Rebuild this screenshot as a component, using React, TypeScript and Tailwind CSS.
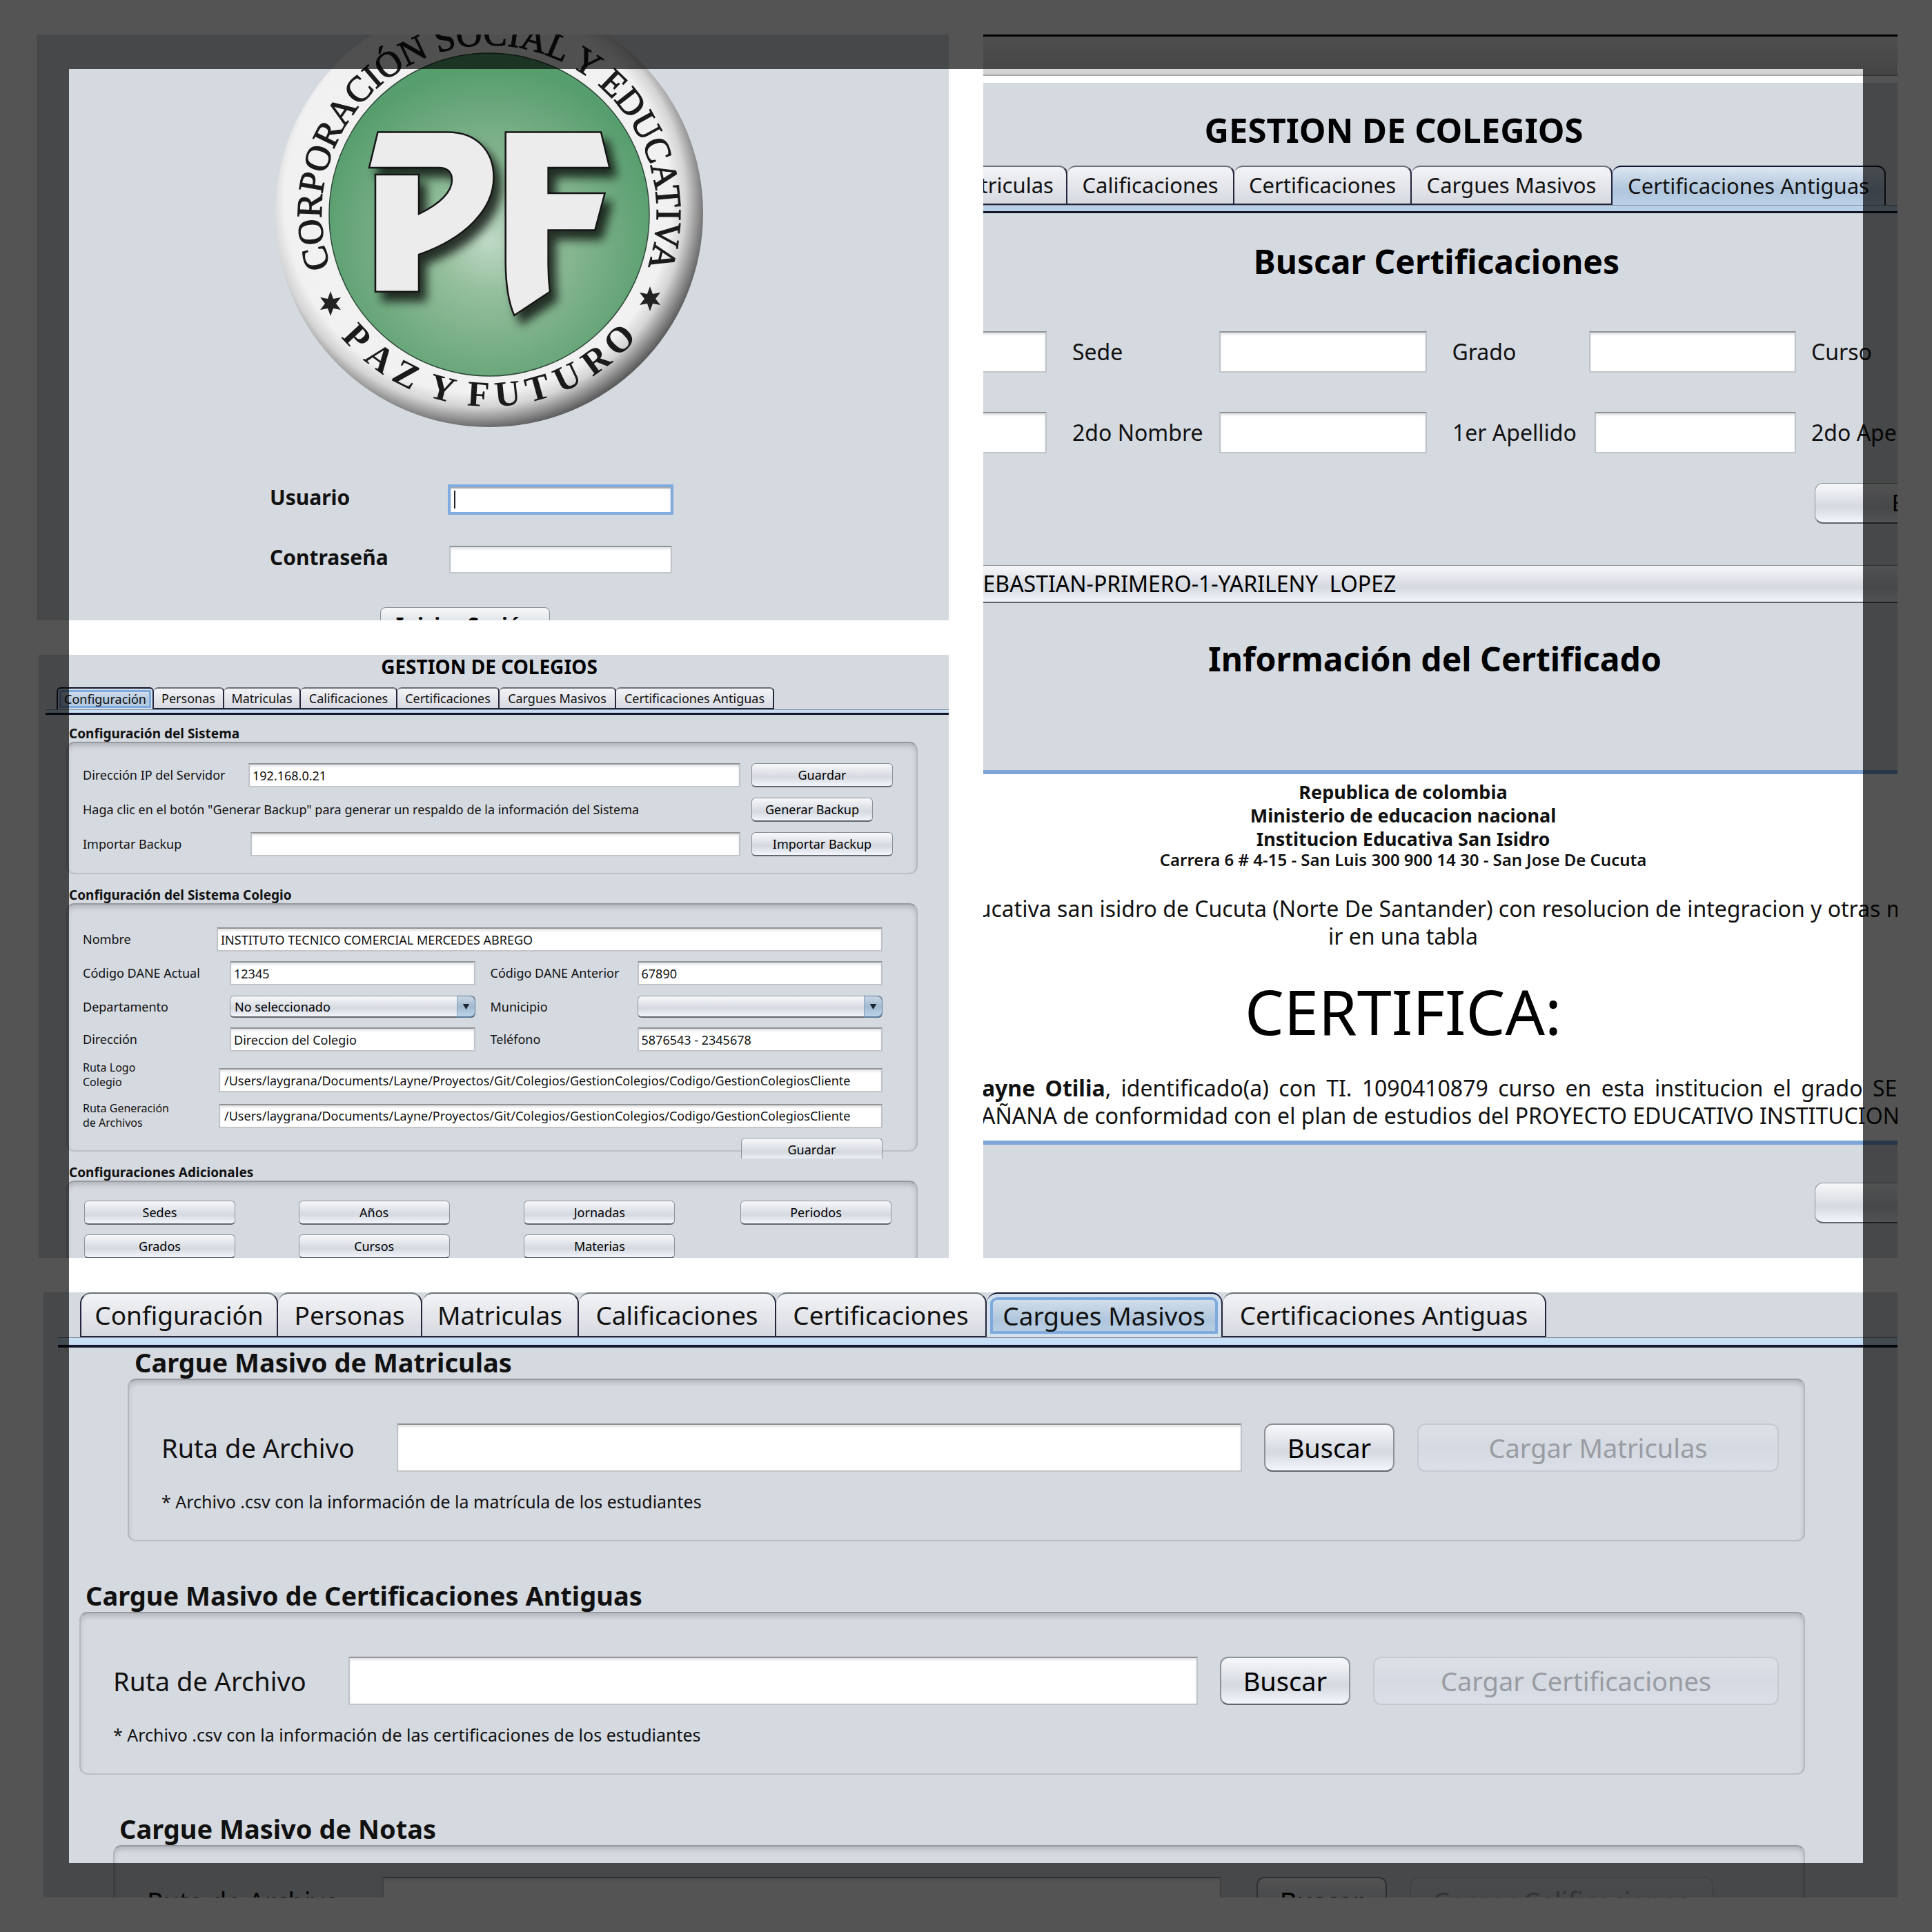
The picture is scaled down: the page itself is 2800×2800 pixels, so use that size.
import React from "react";
import clsx from "clsx";

const raised =
  "border border-[#8d9299] border-b-2 border-b-[#61666c] bg-gradient-to-b from-[#f7f8fa] via-[#d5d9e0] via-60% to-[#f3f6fc] text-black whitespace-nowrap";

function Btn({ children, className, label }: { children?: React.ReactNode; className?: string; label?: string }) {
  return (
    <button type="button" aria-label={label} className={clsx("shrink-0 leading-none text-center", raised, className)}>
      {children}
    </button>
  );
}

function DisabledBtn({ children, className }: { children: React.ReactNode; className?: string }) {
  return (
    <button
      type="button"
      disabled
      className={clsx(
        "shrink-0 rounded-xl border-2 border-[#c5c9d0] bg-gradient-to-b from-[#dde1e7] via-[#d5d9e1] to-[#dbdfe7] leading-none text-[#999ca2] whitespace-nowrap",
        className,
      )}
    >
      {children}
    </button>
  );
}

function Field({ id, value, className, label, type = "text" }: { id?: string; value?: string; className?: string; label?: string; type?: string }) {
  return (
    <input
      id={id}
      type={type}
      aria-label={label}
      defaultValue={value}
      className={clsx(
        "min-w-0 border-2 border-t-[#909296] border-x-[#c0c3c9] border-b-[#c4c5c8] bg-white text-[#111] shadow-[inset_0_3px_3px_rgba(0,0,0,0.10)] outline-none",
        className,
      )}
    />
  );
}

type TabItem = { label: string; width: string };

function Tabs({
  items,
  active,
  focusClass,
  rowClass,
  tabClass,
  bandClass,
}: {
  items: TabItem[];
  active: string;
  focusClass?: string;
  rowClass: string;
  tabClass: string;
  bandClass: string;
}) {
  return (
    <div>
      <div role="tablist" className={clsx("flex", rowClass)}>
        {items.map((t) => {
          const on = t.label === active;
          return (
            <button
              key={t.label}
              type="button"
              role="tab"
              aria-selected={on}
              className={clsx(
                "shrink-0 border-r-2 border-[#23263c] text-center leading-none whitespace-nowrap text-[#111] first:border-l-2",
                tabClass,
                t.width,
                on
                  ? "border-t-[#12162c] bg-gradient-to-b from-[#dce6f1] via-[#b0c6dc] via-60% to-[#bad1e8]"
                  : "border-b-2 border-t-[#6b6f78] bg-gradient-to-b from-[#f3f4f7] to-[#d6d9e0]",
                on && focusClass,
              )}
            >
              {t.label}
            </button>
          );
        })}
      </div>
      <div className={clsx("border-t border-t-[#8a909b] border-b-[#14182b]", bandClass)} />
    </div>
  );
}

const group =
  "rounded-xl border-2 border-t-[#96999e] border-x-[#b3b7bd] border-b-[#bcc0c6] shadow-[inset_0_5px_8px_-2px_rgba(0,0,0,0.20)]";

const motto = [
  { ch: "P", a: 46.9 },
  { ch: "A", a: 37 },
  { ch: "Z", a: 27.2 },
  { ch: "Y", a: 15 },
  { ch: "F", a: 3.4 },
  { ch: "U", a: -5.8 },
  { ch: "T", a: -15.5 },
  { ch: "U", a: -25.4 },
  { ch: "R", a: -36 },
  { ch: "O", a: -45.8 },
];

const star = "M0,-18 L4,-7 L15,-9 L8,0 L15,9 L4,7 L0,18 L-4,7 L-15,9 L-8,0 L-15,-9 L-4,-7 Z";

function Logo() {
  return (
    <svg viewBox="0 0 620 620" role="img" aria-label="Corporación Social y Educativa Paz y Futuro" className="size-[620px] shrink-0">
      <defs>
        <radialGradient id="rim" gradientUnits="userSpaceOnUse" cx="294" cy="290" r="334">
          <stop offset="0" stopColor="#f2f2f2" />
          <stop offset="0.84" stopColor="#f1f1f1" />
          <stop offset="0.9" stopColor="#d4d4d4" />
          <stop offset="0.96" stopColor="#8c8c8c" />
          <stop offset="1" stopColor="#5c5c5c" />
        </radialGradient>
        <radialGradient id="field" gradientUnits="userSpaceOnUse" cx="310" cy="350" r="250">
          <stop offset="0" stopColor="#bfd9c6" />
          <stop offset="0.3" stopColor="#95bf9d" />
          <stop offset="0.7" stopColor="#72ab81" />
          <stop offset="1" stopColor="#579e6e" />
        </radialGradient>
        <filter id="drop" x="-20%" y="-20%" width="150%" height="150%">
          <feDropShadow dx="10" dy="13" stdDeviation="7" floodColor="#000" floodOpacity="0.75" />
        </filter>
        <path id="arc" d="M80.4,389 A243,243 0 1 1 539.6,389" />
      </defs>
      <circle cx="310" cy="310" r="310" fill="url(#rim)" />
      <ellipse cx="310" cy="312" rx="232" ry="234" fill="url(#field)" stroke="#2f4a38" strokeWidth="1.5" />
      <text fontFamily='"Liberation Serif", serif' fontSize="52" fill="#1a1a1a" stroke="#1a1a1a" strokeWidth="1.2" textAnchor="middle">
        <textPath href="#arc" startOffset="50%">
          CORPORACIÓN SOCIAL Y EDUCATIVA
        </textPath>
      </text>
      <g fontFamily='"Liberation Serif", serif' fontSize="52" fontWeight="700" fill="#1a1a1a" textAnchor="middle">
        {motto.map((m, i) => (
          <text key={i} x="310" y="590" transform={`rotate(${m.a} 310 310)`}>
            {m.ch}
          </text>
        ))}
      </g>
      <path d={star} transform="translate(80 441)" fill="#222" />
      <path d={star} transform="translate(543 434)" fill="#222" />
      <g filter="url(#drop)" fill="#ececec" stroke="#161616" strokeWidth="2.5">
        <path d="M148.5,192.5 H250 C292,192.5 316.5,220 316.5,258 C316.5,304 276,346 208,370 V423.7 H145 V254 H208 V311 C240,296 256,278 256,262 C256,250 249,244 237,244 H136 Z" />
        <path d="M333.7,192.5 H472 L484.4,244 H395.6 V281 H477.6 L463.3,334.5 H395.6 V385 Q395.6,405 398,423.7 L346.3,458 Q333.7,430 333.7,378 Z" />
      </g>
    </svg>
  );
}

function LoginPanel() {
  return (
    <section className="ml-[3px] overflow-hidden bg-[#d5d9e0]">
      <div className="-mt-[51px] flex justify-center pr-[10px]">
        <Logo />
      </div>
      <form className="mx-auto flex w-[646px] flex-col text-[30px] text-[#111]">
        <div className="mt-[83px] flex h-11">
          <label htmlFor="usuario" className="w-[258px] leading-[38px] font-bold">
            Usuario
          </label>
          <div className="relative">
            <Field id="usuario" className="block h-11 w-[327px] !border-4 !border-[#7fabdf] !shadow-[inset_0_2px_2px_rgba(0,0,0,0.35)]" />
            <span className="absolute top-[9px] left-[9px] h-[26px] w-[2px] bg-[#222]" />
          </div>
        </div>
        <div className="mt-[45px] flex h-10">
          <label htmlFor="clave" className="w-[260px] leading-[34px] font-bold">
            Contraseña
          </label>
          <Field id="clave" type="password" className="h-10 w-[323px]" />
        </div>
        <Btn className="mt-[49px] ml-[160px] h-[52px] w-[246px] rounded-lg font-bold">Iniciar Sesión</Btn>
      </form>
    </section>
  );
}

const searchTabs: TabItem[] = [
  { label: "Matriculas", width: "w-[192px]" },
  { label: "Calificaciones", width: "w-[242px]" },
  { label: "Certificaciones", width: "w-[257px]" },
  { label: "Cargues Masivos", width: "w-[291px]" },
  { label: "Certificaciones Antiguas", width: "w-[396px]" },
];

function SearchPanel() {
  return (
    <section className="row-span-2 overflow-hidden bg-[#d5d9e0] text-[32px] text-[#111]">
      <div className="h-[60px] border-t-[3px] border-b-2 border-t-black border-b-[#a9a9a9] bg-gradient-to-b from-[#ececec] to-[#d2d2d2]" />
      <div className="h-[10px] bg-white" />
      <h1 className="mt-10 pr-[135px] text-center text-[49px] leading-[56px] font-bold text-black">GESTION DE COLEGIOS</h1>
      <div className="mt-[24px]">
        <Tabs
          items={searchTabs}
          active="Certificaciones Antiguas"
          rowClass="-ml-[70px] h-[57px] text-[31px]"
          tabClass="rounded-t-xl border-t-2"
          bandClass="h-[12px] border-b-[3px] bg-[#b9d0e8]"
        />
      </div>
      <h2 className="mt-[42px] pr-[11px] text-center text-[48px] leading-[56px] font-bold text-black">Buscar Certificaciones</h2>
      <div className="mt-[73px] flex h-[60px] items-center whitespace-nowrap">
        <Field label="Año" className="-ml-[10px] h-[60px] w-[102px]" />
        <label htmlFor="sede" className="ml-[37px] w-[213px] shrink-0">
          Sede
        </label>
        <Field id="sede" className="h-[60px] flex-1" />
        <label htmlFor="grado" className="ml-[37px] w-[198px] shrink-0">
          Grado
        </label>
        <Field id="grado" className="h-[60px] flex-1" />
        <span className="ml-[22px] w-[125px] shrink-0">Curso</span>
      </div>
      <div className="mt-[57px] flex h-[60px] items-center whitespace-nowrap">
        <Field label="1er Nombre" className="-ml-[10px] h-[60px] w-[102px]" />
        <label htmlFor="nombre2" className="ml-[37px] w-[213px] shrink-0">
          2do Nombre
        </label>
        <Field id="nombre2" className="h-[60px] flex-[301]" />
        <label htmlFor="apellido1" className="ml-[37px] w-[206px] shrink-0">
          1er Apellido
        </label>
        <Field id="apellido1" className="h-[60px] flex-[292]" />
        <span className="ml-[22px] w-[125px] shrink-0">2do Apellido</span>
      </div>
      <div className="mt-[43px] flex justify-end">
        <Btn className="-mr-[206px] h-[59px] w-[326px] rounded-xl">Buscar</Btn>
      </div>
      <button
        type="button"
        aria-haspopup="listbox"
        className={clsx("mt-[60px] -ml-[19px] block h-[55px] w-[110%] text-left leading-none whitespace-pre", raised)}
      >
        {"SEBASTIAN-PRIMERO-1-YARILENY  LOPEZ"}
      </button>
      <h2 className="mt-[53px] pr-[16px] text-center text-[48px] leading-[56px] font-bold text-black">Información del Certificado</h2>
      <article className="mt-[133px] border-y-[6px] border-[#7da5d6] bg-white pt-[9px] pb-4 leading-10">
        <div className="pr-[108px] text-center text-[27px] leading-[34px] font-bold">
          <p>Republica de colombia</p>
          <p>Ministerio de educacion nacional</p>
          <p>Institucion Educativa San Isidro</p>
          <p className="text-[24px] leading-[26px] font-semibold">Carrera 6 # 4-15 - San Luis 300 900 14 30 - San Jose De Cucuta</p>
        </div>
        <p className="mt-[38px] -ml-[28px] whitespace-nowrap">
          ducativa san isidro de Cucuta (Norte De Santander) con resolucion de integracion y otras mas
        </p>
        <p className="pr-[108px] text-center">ir en una tabla</p>
        <p className="mt-[38px] pr-[108px] text-center text-[90px] leading-[100px] text-black">CERTIFICA:</p>
        <div className="mt-[42px] -mr-[18px] -ml-[20px]">
          <p className="whitespace-nowrap [text-align-last:justify]">
            <b>Layne Otilia</b>, identificado(a) con TI. 1090410879 curso en esta institucion el grado SEX
          </p>
          <p className="-ml-[12px] whitespace-nowrap">
            MAÑANA de conformidad con el plan de estudios del PROYECTO EDUCATIVO INSTITUCIONAL
          </p>
        </div>
      </article>
      <div className="mt-[55px] flex justify-end">
        <Btn label="Generar" className="-mr-[210px] h-[59px] w-[330px] rounded-xl" />
      </div>
    </section>
  );
}

const configTabs: TabItem[] = [
  { label: "Configuración", width: "w-[141px]" },
  { label: "Personas", width: "w-[102px]" },
  { label: "Matriculas", width: "w-[111px]" },
  { label: "Calificaciones", width: "w-[140px]" },
  { label: "Certificaciones", width: "w-[148px]" },
  { label: "Cargues Masivos", width: "w-[169px]" },
  { label: "Certificaciones Antiguas", width: "w-[229px]" },
];

const small = "rounded-md";

function Combo({ id, value, className }: { id: string; value: string; className?: string }) {
  return (
    <div className={clsx("relative min-w-0", className)}>
      <select id={id} defaultValue={value} className={clsx("block h-8 w-full appearance-none rounded-md pl-1.5 leading-none", raised)}>
        <option>{value}</option>
      </select>
      <span className="pointer-events-none absolute inset-y-0 right-0 flex w-[27px] items-center justify-center rounded-r-lg border border-b-2 border-[#5c7b99] border-l-[#8aa5bf] bg-gradient-to-b from-[#c9d7e5] via-[#a2bad1] to-[#bcd3ea]">
        <svg viewBox="0 0 12 10" className="h-[8px] w-[11px]">
          <path d="M0,0 H12 L6,10 Z" fill="#1c2430" />
        </svg>
      </span>
    </div>
  );
}

const legend = "ml-11 text-[19px] leading-6 font-bold text-[#111]";
const projectPath = "/Users/laygrana/Documents/Layne/Proyectos/Git/Colegios/GestionColegios/Codigo/GestionColegiosCliente";

function ConfigPanel() {
  return (
    <section className="ml-[6px] overflow-hidden bg-[#d5d9e0] text-[18px] text-[#111]">
      <h1 className="pr-[13px] text-center text-[28px] leading-[34px] font-bold text-black">GESTION DE COLEGIOS</h1>
      <div className="mt-[13px]">
        <Tabs
          items={configTabs}
          active="Configuración"
          focusClass="shadow-[inset_0_0_0_2px_#d3e1ef,inset_0_0_0_5px_#7faadc]"
          rowClass="ml-[26px] h-8"
          tabClass="rounded-t-md border-t-2"
          bandClass="ml-[10px] h-[8px] border-b-[3px] bg-[#c9dff5]"
        />
      </div>

      <h2 className={clsx("mt-[15px]", legend)}>Configuración del Sistema</h2>
      <div className={clsx("mr-[45px] ml-10 flex h-[192px] flex-col gap-[15px] pt-[29px] pr-[34px] pl-[22px]", group)}>
        <div className="flex h-[35px] items-center">
          <label htmlFor="ip" className="w-[240px]">
            Dirección IP del Servidor
          </label>
          <Field id="ip" value="192.168.0.21" className="h-[35px] flex-1 pl-1" />
          <Btn className={clsx("ml-4 h-[35px] w-[205px]", small)}>Guardar</Btn>
        </div>
        <div className="flex h-[35px] items-center">
          <p className="flex-1">Haga clic en el botón "Generar Backup" para generar un respaldo de la información del Sistema</p>
          <Btn className={clsx("mr-[29px] h-[35px] w-[176px]", small)}>Generar Backup</Btn>
        </div>
        <div className="flex h-[35px] items-center">
          <label htmlFor="backup" className="w-[243px]">
            Importar Backup
          </label>
          <Field id="backup" className="h-[35px] flex-1 pl-1" />
          <Btn className={clsx("ml-4 h-[35px] w-[205px]", small)}>Importar Backup</Btn>
        </div>
      </div>

      <h2 className={clsx("mt-[18px]", legend)}>Configuración del Sistema Colegio</h2>
      <div className={clsx("mr-[45px] ml-10 flex flex-col pt-[33px] pr-[49px] pl-[22px]", group)}>
        <div className="flex h-[35px] items-center">
          <label htmlFor="nombre" className="w-[194px]">
            Nombre
          </label>
          <Field id="nombre" value="INSTITUTO TECNICO COMERCIAL MERCEDES ABREGO" className="h-[35px] flex-1 pl-1" />
        </div>
        <div className="mt-[14px] flex h-[35px] items-center">
          <label htmlFor="dane" className="w-[213px]">
            Código DANE Actual
          </label>
          <Field id="dane" value="12345" className="h-[35px] flex-1 pl-1" />
          <label htmlFor="daneAnt" className="ml-[22px] w-[213px]">
            Código DANE Anterior
          </label>
          <Field id="daneAnt" value="67890" className="h-[35px] flex-1 pl-1" />
        </div>
        <div className="mt-[15px] flex h-8 items-center">
          <label htmlFor="depto" className="w-[213px]">
            Departamento
          </label>
          <Combo id="depto" value="No seleccionado" className="flex-1" />
          <label htmlFor="municipio" className="ml-[22px] w-[213px]">
            Municipio
          </label>
          <Combo id="municipio" value="" className="flex-1" />
        </div>
        <div className="mt-[14px] flex h-[35px] items-center">
          <label htmlFor="direccion" className="w-[213px]">
            Dirección
          </label>
          <Field id="direccion" value="Direccion del Colegio" className="h-[35px] flex-1 pl-1" />
          <label htmlFor="telefono" className="ml-[22px] w-[213px]">
            Teléfono
          </label>
          <Field id="telefono" value="5876543 - 2345678" className="h-[35px] flex-1 pl-1" />
        </div>
        <div className="mt-[13px] flex h-[46px] items-end">
          <label htmlFor="rutaLogo" className="w-[197px] self-start text-[16px] leading-[21px]">
            Ruta Logo
            <br />
            Colegio
          </label>
          <Field id="rutaLogo" value={projectPath} className="h-[35px] flex-1 pl-1.5" />
        </div>
        <div className="mt-[13px] flex h-[42px] items-center">
          <label htmlFor="rutaGen" className="w-[197px] text-[16px] leading-[21px]">
            Ruta Generación
            <br />
            de Archivos
          </label>
          <Field id="rutaGen" value={projectPath} className="h-[35px] flex-1 pl-1.5" />
        </div>
        <div className="mt-[11px] -mb-3 h-[30px] w-[205px] self-end overflow-hidden">
          <Btn className={clsx("h-[35px] w-full", small)}>Guardar</Btn>
        </div>
      </div>

      <h2 className={clsx("mt-[18px]", legend)}>Configuraciones Adicionales</h2>
      <div className={clsx("mr-[45px] ml-10 grid h-[200px] grid-cols-[311fr_327fr_314fr_219fr] content-start gap-y-[14px] pt-[27px] pr-9 pl-6", group)}>
        {["Sedes", "Años", "Jornadas", "Periodos", "Grados", "Cursos", "Materias"].map((n) => (
          <Btn key={n} className={clsx("h-[35px] w-[219px]", small)}>
            {n}
          </Btn>
        ))}
      </div>
    </section>
  );
}

const uploadTabs: TabItem[] = [
  { label: "Configuración", width: "w-[287px]" },
  { label: "Personas", width: "w-[209px]" },
  { label: "Matriculas", width: "w-[227px]" },
  { label: "Calificaciones", width: "w-[286px]" },
  { label: "Certificaciones", width: "w-[305px]" },
  { label: "Cargues Masivos", width: "w-[342px]" },
  { label: "Certificaciones Antiguas", width: "w-[469px]" },
];

function Upload({
  id,
  title,
  action,
  note,
  titleClass,
  boxClass,
  searchClass,
  actionClass,
}: {
  id: string;
  title: string;
  action: string;
  note?: string;
  titleClass: string;
  boxClass: string;
  searchClass: string;
  actionClass: string;
}) {
  return (
    <>
      <h2 className={clsx("text-[38px] leading-[42px] font-bold text-[#111]", titleClass)}>{title}</h2>
      <div className={clsx("mt-[3px] mr-[134px] pl-[47px]", group, boxClass)}>
        <div className="flex h-[70px] items-center">
          <label htmlFor={id} className="w-[341px] shrink-0">
            Ruta de Archivo
          </label>
          <Field id={id} className="h-[70px] flex-1" />
          <Btn className={clsx("h-[70px] w-[189px] rounded-xl border-2", searchClass)}>Buscar</Btn>
          <DisabledBtn className={clsx("ml-[33px] h-[70px]", actionClass)}>{action}</DisabledBtn>
        </div>
        {note && <p className="mt-[28px] text-[25px] leading-[30px]">{note}</p>}
      </div>
    </>
  );
}

function UploadPanel() {
  return (
    <section className="col-span-2 ml-[13px] overflow-hidden bg-[#d5d9e0] text-[38px] text-[#111]">
      <Tabs
        items={uploadTabs}
        active="Cargues Masivos"
        focusClass="shadow-[inset_0_0_0_5px_#d3e1ef,inset_0_0_0_9px_#7faadc]"
        rowClass="ml-[53px] h-[65px] text-[37px]"
        tabClass="rounded-t-2xl border-t-2"
        bandClass="ml-[21px] h-[15px] border-b-4 bg-[#c9dff5]"
      />
      <Upload
        id="archivoMatriculas"
        title="Cargue Masivo de Matriculas"
        action="Cargar Matriculas"
        note="* Archivo .csv con la información de la matrícula de los estudiantes"
        titleClass="ml-[132px]"
        boxClass="ml-[122px] h-[236px] pt-[63px] pr-9"
        searchClass="ml-8"
        actionClass="w-[524px]"
      />
      <Upload
        id="archivoCertificaciones"
        title="Cargue Masivo de Certificaciones Antiguas"
        action="Cargar Certificaciones"
        note="* Archivo .csv con la información de las certificaciones de los estudiantes"
        titleClass="mt-[57px] ml-[61px]"
        boxClass="ml-[52px] h-[236px] pt-[63px] pr-9"
        searchClass="ml-8"
        actionClass="w-[588px]"
      />
      <Upload
        id="archivoNotas"
        title="Cargue Masivo de Notas"
        action="Cargar Calificaciones"
        titleClass="mt-[57px] ml-[110px]"
        boxClass="ml-[101px] h-[236px] pt-[44px] pr-[131px]"
        searchClass="ml-[51px]"
        actionClass="w-[440px]"
      />
    </section>
  );
}

export default function App() {
  return (
    <main className="relative grid h-screen w-full grid-cols-2 grid-rows-[849fr_874fr_877fr] gap-[50px] overflow-hidden bg-white p-[50px] font-['Noto_Sans',sans-serif]">
      <LoginPanel />
      <SearchPanel />
      <ConfigPanel />
      <UploadPanel />
      <div className="pointer-events-none absolute inset-0 border-[100px] border-black/67" />
    </main>
  );
}
